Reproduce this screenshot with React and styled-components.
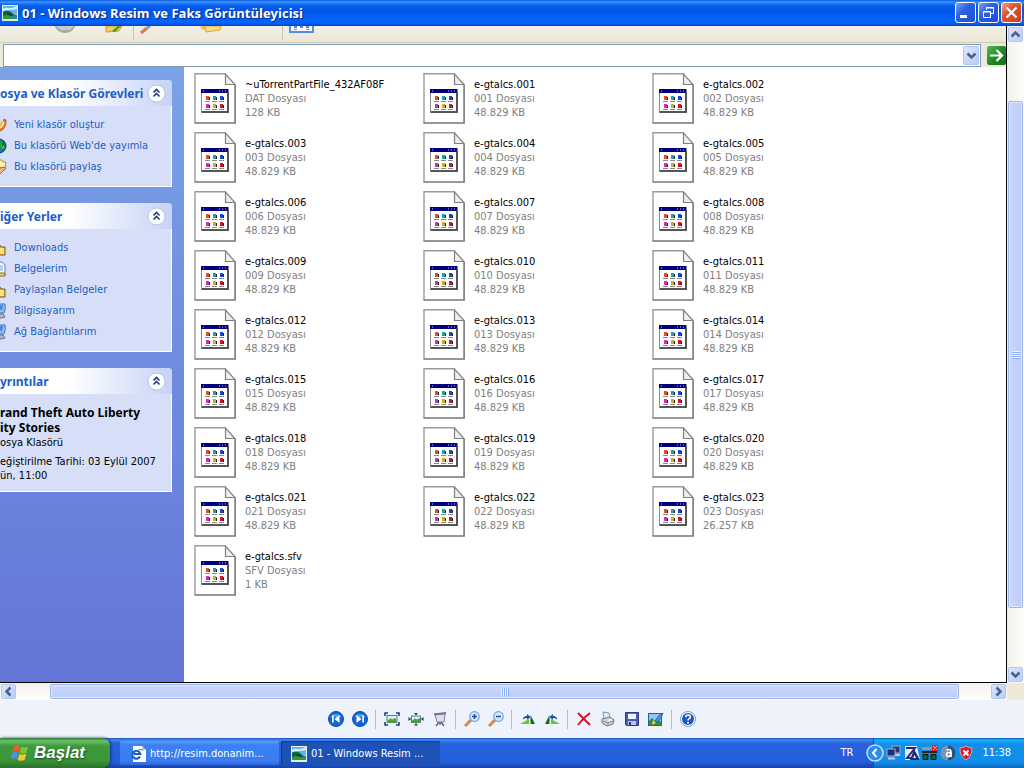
import React from 'react';
import styled, { createGlobalStyle, css } from 'styled-components';

const ui = "'DejaVu Sans Condensed', 'DejaVu Sans', Tahoma, sans-serif";

const tasks = [
  { icon: 'new', label: 'Yeni klasör oluştur' },
  { icon: 'web', label: "Bu klasörü Web'de yayımla" },
  { icon: 'share', label: 'Bu klasörü paylaş' },
];

const places = [
  { icon: 'folder', label: 'Downloads' },
  { icon: 'docs', label: 'Belgelerim' },
  { icon: 'folder', label: 'Paylaşılan Belgeler' },
  { icon: 'pc', label: 'Bilgisayarım' },
  { icon: 'pc', label: 'Ağ Bağlantılarım' },
];

const parts = Array.from({ length: 23 }, (_, i) => {
  const ext = String(i + 1).padStart(3, '0');
  return { name: `e-gtalcs.${ext}`, type: `${ext} Dosyası`, size: ext === '023' ? '26.257 KB' : '48.829 KB' };
});

const files = [
  { name: '~uTorrentPartFile_432AF08F', type: 'DAT Dosyası', size: '128 KB' },
  ...parts,
  { name: 'e-gtalcs.sfv', type: 'SFV Dosyası', size: '1 KB' },
];

const PictureIcon = () => (
  <svg width="16" height="16" viewBox="0 0 16 16" aria-hidden="true">
    <rect width="16" height="16" fill="#e9f1d8" />
    <rect x="1" y="1" width="14" height="8" fill="#5fb4ee" />
    <path d="M1 4q2-2 5-1t9-2v3q-4 1-7 1t-7 1z" fill="#d9effb" />
    <path d="M1 7q2-2 6-1 3 1 4 3l4 1v1H1z" fill="#12643a" />
    <path d="M6 8q3 0 5 3H4z" fill="#0c3f35" />
    <path d="M1 11q5-2 8 0l6 1v2H1z" fill="#2d9a3c" />
    <path d="M8 12q3-2 7-2v2z" fill="#2a78cf" />
  </svg>
);

const FileIcon = () => (
  <svg width="42" height="51" viewBox="0 0 42 51" aria-hidden="true">
    <path d="M1 .5h30.500L41 12v38.500H1z" fill="#fff" />
    <path d="M1 50V.7h30.500" fill="none" stroke="#9a9a9a" strokeWidth="1.400" />
    <path d="M.5 50h40.600V12" fill="none" stroke="#777" strokeWidth="1.600" />
    <path d="M31.500 1v10.500H41z" fill="#eee" stroke="#808080" strokeWidth="1.200" />
    <rect x="7" y="16" width="28" height="24" fill="#8a8a8a" />
    <rect x="8" y="20" width="25" height="18" fill="#fff" />
    <rect x="7" y="16" width="27" height="4" fill="#00007e" />
    <path d="M9 18h1M25 18h1M28 18h1M31 18h1" stroke="#b8c4ff" />
    <path d="M34 19v20H8" fill="none" stroke="#444" strokeWidth="1.500" />
    <g stroke="#8a8a8a">
      <path d="M11 28.500h5M18 28.500h5M25 28.500h5M11 36.500h5M18 36.500h5M25 36.500h5" />
    </g>
    <rect x="12" y="23" width="3" height="4" fill="#d9532c" />
    <rect x="19" y="23" width="3" height="4" fill="#1da0a8" />
    <rect x="26" y="23" width="3" height="4" fill="#1746d8" />
    <rect x="12" y="31" width="3" height="4" fill="#d32fb4" />
    <rect x="19" y="31" width="3" height="4" fill="#d2a91c" />
    <rect x="26" y="31" width="3" height="4" fill="#c91530" />
    <path d="M15.500 24v3M22.500 24v3M29.500 24v3M15.500 32v3M22.500 32v3M29.500 32v3" stroke="#222" />
  </svg>
);

const Chevron = ({ dir }) => {
  const turn = { up: 0, right: 90, down: 180, left: 270 }[dir];
  return (
    <svg width="11" height="11" viewBox="0 0 11 11" aria-hidden="true">
      <path
        d="M1.500 7.500l4-4 4 4"
        fill="none"
        stroke="#4d6185"
        strokeWidth="2.500"
        transform={`rotate(${turn} 5.500 5.500)`}
      />
    </svg>
  );
};

const linkArt = {
  new: (
    <>
      <path d="M1 4h8l4 2v7l-5 2H1z" fill="#f6c65a" />
      <path d="M6 12q6-2 7-10l2 1q1 9-8 12z" fill="#f07a2a" stroke="#a04a10" strokeWidth=".7" />
      <path d="M9 11q3-2 4-6" fill="none" stroke="#fff3c8" strokeWidth="1.500" />
    </>
  ),
  web: (
    <>
      <circle cx="8" cy="8" r="7" fill="#1c6fc4" stroke="#0b3f6b" />
      <path d="M6 2q5 0 7 4l-2 3-3 1-1 4q-4-2-3-7z" fill="#25a336" />
      <path d="M11 3l4 5-4 6z" fill="#0c6a25" />
      <path d="M10 8l3-1 1 3-3 2z" fill="#2fc04a" />
    </>
  ),
  share: (
    <>
      <path d="M4 1h7l1 2h3l-1 6H4z" fill="#fff3bd" stroke="#b98a2a" />
      <path d="M1 10q5-3 8-1l5-1q2 2-1 3l-4 4H1z" fill="#f3b76e" stroke="#a8662b" />
    </>
  ),
  folder: (
    <>
      <path d="M1 5h8l1 2h4v8H1z" fill="#efb93c" stroke="#7a6120" />
      <path d="M2 8h11v6H2z" fill="#ffe27a" />
    </>
  ),
  docs: (
    <>
      <path d="M3 1h8l3 3v10H3z" fill="#f7fbff" stroke="#5b7fae" />
      <path d="M5 5h7M5 7h7M5 9h7" stroke="#78a7dd" />
      <path d="M2 12h12v3H2z" fill="#f0cf6a" stroke="#8b6d20" />
    </>
  ),
  pc: (
    <>
      <path d="M3 1h11q1 5-1 9H2z" fill="#8ec4f6" stroke="#4a6da8" />
      <path d="M6 3l6-1-1 6z" fill="#3a86e0" />
      <path d="M4 11h8l2 3-4 1H2z" fill="#bcb4c8" stroke="#6f6888" />
    </>
  ),
};

const viewerGroups = [
  [
    {
      label: 'Önceki resim',
      art: (
        <>
          <circle cx="8" cy="8" r="7.500" fill="#1265d4" stroke="#0a4cae" />
          <path d="M2.500 6a6 5 0 0 1 11 0z" fill="#4f9ff2" />
          <path d="M4 4.500h1.700v7H4zM11.500 4v8L6.500 8z" fill="#fff" />
        </>
      ),
    },
    {
      label: 'Sonraki resim',
      art: (
        <>
          <circle cx="8" cy="8" r="7.500" fill="#1265d4" stroke="#0a4cae" />
          <path d="M2.500 6a6 5 0 0 1 11 0z" fill="#4f9ff2" />
          <path d="M10.300 4.500H12v7h-1.700zM4.500 4v8l5-4z" fill="#fff" />
        </>
      ),
    },
  ],
  [
    {
      label: 'En uygun',
      art: (
        <>
          <path d="M1 5V2h3M12 2h3v3M15 11v3h-3M4 14H1v-3" fill="none" stroke="#1b3a86" strokeWidth="1.500" />
          <rect x="3" y="4.500" width="10" height="7" fill="#d9eefb" stroke="#2f6f4a" strokeWidth=".8" />
          <path d="M3.500 9.500l3-2 2 1 2-1.500 2 1.500v3h-9z" fill="#4aa52f" />
        </>
      ),
    },
    {
      label: 'Gerçek boyut',
      art: (
        <>
          <rect x="3.500" y="5" width="9" height="6.500" fill="#d9eefb" stroke="#2f6f4a" strokeWidth=".8" />
          <path d="M4 9.500l3-2 2 1 3-1.500v4H4z" fill="#4aa52f" />
          <path d="M8 4.500L6 2h4zM8 12l-2 2.500h4zM3.200 8L.5 6v4zM12.800 8l2.700-2v4z" fill="#1b3a86" />
        </>
      ),
    },
    {
      label: 'Slayt gösterisi',
      art: (
        <>
          <path d="M7 11l-3 4M9 11l3 4M8 11v3" stroke="#54546c" strokeWidth="1.300" />
          <path d="M3 3h10l-1 8H5z" fill="#dcdcf3" stroke="#8080a4" />
          <path d="M2 3.500L14 2" stroke="#73738f" strokeWidth="1.800" />
        </>
      ),
    },
  ],
  [
    {
      label: 'Yakınlaştır',
      art: (
        <>
          <path d="M1 15l6-6" stroke="#c98a55" strokeWidth="3" />
          <circle cx="10.500" cy="5.500" r="4.800" fill="#d3eafc" stroke="#75a4d8" strokeWidth="1.200" />
          <path d="M8 5.500h5M10.500 3v5" stroke="#1c4f9c" strokeWidth="1.500" />
        </>
      ),
    },
    {
      label: 'Uzaklaştır',
      art: (
        <>
          <path d="M1 15l6-6" stroke="#c98a55" strokeWidth="3" />
          <circle cx="10.500" cy="5.500" r="4.800" fill="#d3eafc" stroke="#75a4d8" strokeWidth="1.200" />
          <path d="M8 5.500h5" stroke="#1c4f9c" strokeWidth="1.500" />
        </>
      ),
    },
  ],
  [
    {
      label: 'Saat yönünde döndür',
      art: (
        <>
          <path d="M0 13l9-5v5z" fill="#5fc739" />
          <path d="M10.500 13V4L15 13z" fill="#176a20" />
          <path d="M3 8.500Q3 5 7 5V3l3.500 3L7 9V7Q5 6.500 3 8.500z" fill="#1a4f9e" />
        </>
      ),
    },
    {
      label: 'Saat yönünün tersine döndür',
      art: (
        <>
          <path d="M16 13L7 8v5z" fill="#5fc739" />
          <path d="M5.500 13V4L1 13z" fill="#176a20" />
          <path d="M13 8.500Q13 5 9 5V3L5.500 6 9 9V7q2-.5 4 1.500z" fill="#1a4f9e" />
        </>
      ),
    },
  ],
  [
    {
      label: 'Sil',
      art: <path d="M2 2q5 5 12 12M14 2Q7 7 2 14" fill="none" stroke="#d8112f" strokeWidth="2" />,
    },
    {
      label: 'Yazdır',
      art: (
        <>
          <path d="M3 1l6 1 1 5-6 1z" fill="#dcecff" stroke="#7797c4" />
          <path d="M2 8l8-2 4 3-1 4-6 2-5-3z" fill="#d4d4d0" stroke="#777" />
          <path d="M3 10l5 2 5-2M8 12v3" fill="none" stroke="#8a8a86" />
          <path d="M8 9l3-1 1 1-3 1z" fill="#fff" />
        </>
      ),
    },
    {
      label: 'Farklı kaydet',
      art: (
        <>
          <path d="M1.500 1.500h13v13h-12l-1-1z" fill="#4a58b8" stroke="#2b3888" />
          <path d="M4 2h8v6H4z" fill="#f1f3fb" />
          <path d="M4 2.500h8" stroke="#d44b62" />
          <path d="M4 10h8v4H4z" fill="#bfc5de" />
          <path d="M5 11h2v3H5z" fill="#28357e" />
        </>
      ),
    },
    {
      label: 'Düzenle',
      art: (
        <>
          <rect x=".5" y="2.500" width="13" height="12" fill="#8ccbf5" stroke="#2a5b9e" />
          <path d="M1 10l3-3 3 3 3-2 3 3v3H1z" fill="#2f8f3a" />
          <path d="M4 14l1-5 3 3z" fill="#f3d24c" />
          <path d="M7 10q3-6 8-8-1 6-6 9z" fill="#4d8fe0" stroke="#1f4f9c" strokeWidth=".7" />
        </>
      ),
    },
  ],
  [
    {
      label: 'Yardım',
      art: (
        <>
          <circle cx="8" cy="8" r="7.500" fill="#fff" stroke="#7f9ad0" />
          <circle cx="8" cy="8" r="6" fill="#1d53c2" />
          <path d="M5.800 6.300q0-2.300 2.300-2.300t2.200 2q0 1.200-1.200 1.800-1 .5-1 1.700" fill="none" stroke="#fff" strokeWidth="1.700" />
          <circle cx="8" cy="11.700" r="1" fill="#fff" />
        </>
      ),
    },
  ],
];

const trayArt = [
  <g key="net">
    <rect x="6" y="1" width="8" height="7" fill="#2a3a80" stroke="#9facd4" />
    <path d="M8 10h6" stroke="#c8cfe4" strokeWidth="2" />
    <rect x="1" y="4" width="8" height="7" fill="#23306c" stroke="#9facd4" />
    <path d="M2 13.500h7" stroke="#c8cfe4" strokeWidth="2" />
  </g>,
  <g key="za">
    <path d="M1 1h12l3 14H1z" fill="#e9edf9" />
    <path d="M2 3h9L3 13h5" fill="none" stroke="#1c2d7c" strokeWidth="2" />
    <path d="M10 4l6 11H6z" fill="#1c2d7c" />
    <path d="M10.500 10l1.500 3H9z" fill="#e8ecfa" />
  </g>,
  <g key="gauge">
    <path d="M0 2h15v3H0z" fill="#8d9a9a" />
    <path d="M0 6h15v2H0z" fill="#222" />
    <path d="M1 9.500h5v5H1zM9 9.500h5v5H9z" fill="#0b6b20" stroke="#111" />
    <path d="M10 0h6v6h-6z" fill="#e12020" />
    <path d="M11 1l4 4M15 1l-4 4" stroke="#fff" strokeDasharray="1 1" />
  </g>,
  <g key="av">
    <circle cx="8" cy="8" r="7.500" fill="#7896ac" />
    <path d="M8 .5a7.500 7.500 0 0 1 0 15z" fill="#2f4f78" />
    <circle cx="8.500" cy="9.500" r="2" fill="none" stroke="#fff" strokeWidth="1.800" />
    <path d="M6.500 5q4.500-1.500 4.500 2v5" fill="none" stroke="#fff" strokeWidth="1.800" />
  </g>,
  <g key="shield">
    <path d="M8 1q3 2 6 2 .5 8-6 12-6.500-4-6-12 3 0 6-2z" fill="#d91c25" stroke="#d9a3b0" />
    <path d="M5.500 5.500l5 5M10.500 5.500l-5 5" stroke="#fff" strokeWidth="1.800" />
  </g>,
];

const Panel = ({ title, children }) => (
  <PanelFrame>
    <PanelHead>
      <PanelTitle>{title}</PanelTitle>
      <Collapse type="button" aria-label="Daralt">
        <svg width="19" height="19" viewBox="0 0 19 19" aria-hidden="true">
          <circle cx="9.500" cy="9.500" r="8.500" fill="#fff" stroke="#b6c3e2" />
          <path d="M6.500 8.500l3-3 3 3M6.500 12.500l3-3 3 3" fill="none" stroke="#1f3d80" strokeWidth="1.600" />
        </svg>
      </Collapse>
    </PanelHead>
    <PanelBody>{children}</PanelBody>
  </PanelFrame>
);

const Links = ({ items }) => (
  <LinkList>
    {items.map(({ icon, label }) => (
      <li key={label}>
        <TaskLink href="#">
          <svg width="16" height="16" viewBox="0 0 16 16" aria-hidden="true">
            {linkArt[icon]}
          </svg>
          {label}
        </TaskLink>
      </li>
    ))}
  </LinkList>
);

const ScrollBar = ({ vertical, before, thumb, after }) => (
  <Track $vertical={vertical}>
    <ScrollButton type="button" aria-label={vertical ? 'Yukarı' : 'Sola'}>
      <Chevron dir={vertical ? 'up' : 'left'} />
    </ScrollButton>
    <Space $grow={before} />
    <Thumb $grow={thumb} $vertical={vertical}>
      <Grip $vertical={vertical} />
    </Thumb>
    <Space $grow={after} />
    <ScrollButton type="button" aria-label={vertical ? 'Aşağı' : 'Sağa'}>
      <Chevron dir={vertical ? 'down' : 'right'} />
    </ScrollButton>
  </Track>
);

const App = () => (
  <Viewer>
    <GlobalStyle />
    <TitleBar>
      <PictureIcon />
      <Title>01 - Windows Resim ve Faks Görüntüleyicisi</Title>
      <CaptionButton type="button" aria-label="Simge durumuna küçült">
        <svg width="19" height="19" viewBox="0 0 19 19" aria-hidden="true">
          <path d="M4 13.500h7" stroke="#fff" strokeWidth="3" />
        </svg>
      </CaptionButton>
      <CaptionButton type="button" aria-label="Önceki boyut">
        <svg width="19" height="19" viewBox="0 0 19 19" aria-hidden="true">
          <path d="M7.500 7V4.500h7v6H12M7 5h8" fill="none" stroke="#fff" />
          <path d="M4.500 8.500h7v6h-7zM4 9h8" fill="none" stroke="#fff" />
        </svg>
      </CaptionButton>
      <CaptionButton type="button" aria-label="Kapat" $close>
        <svg width="19" height="19" viewBox="0 0 19 19" aria-hidden="true">
          <path d="M4.500 4.500l10 10M14.500 4.500l-10 10" stroke="#fff" strokeWidth="2.200" />
        </svg>
      </CaptionButton>
    </TitleBar>

    <Stage>
      <Picture>
        <IconStrip>
          <svg width="26" height="10" viewBox="0 0 26 10" aria-hidden="true">
            <circle cx="13" cy="-4" r="11" fill="#a9a9a5" />
            <path d="M4 0h18l-4 4H9z" fill="#c9c9c5" />
          </svg>
          <OpenFolder width="18" height="10" viewBox="0 0 18 10" aria-hidden="true">
            <path d="M1 0h16l-3 5-13 1z" fill="#f4ce5e" stroke="#c79f32" />
            <path d="M7 5l6-5h3l-6 6z" fill="#3c9b34" />
          </OpenFolder>
          <Rule />
          <svg width="14" height="10" viewBox="0 0 14 10" aria-hidden="true">
            <path d="M1 7l6-5" stroke="#d37a55" strokeWidth="3" />
            <path d="M7 2l3-2" stroke="#8c9fc8" strokeWidth="3" />
          </svg>
          <FolderPair width="22" height="10" viewBox="0 0 22 10" aria-hidden="true">
            <path d="M0 0h16v2L2 4z" fill="#efc14c" />
            <path d="M5 0h16l-1 4-14 2z" fill="#fbe08a" stroke="#d7a637" />
          </FolderPair>
          <Rule />
          <svg width="26" height="10" viewBox="0 0 26 10" aria-hidden="true">
            <path d="M1 -2v8h23v-8z" fill="#f6f9ff" stroke="#4f8ee0" strokeWidth="2" />
            <path d="M5 1h3M11 1h3M17 1h3" stroke="#5d86c8" strokeWidth="2" />
            <path d="M5 3.500h3M17 3.500h3" stroke="#d57461" />
          </svg>
        </IconStrip>

        <AddressBar>
          <AddressField>
            <AddressInput type="text" aria-label="Adres" />
            <DropButton type="button" aria-label="Adres listesi">
              <Chevron dir="down" />
            </DropButton>
          </AddressField>
          <GoButton type="button" aria-label="Git">
            <svg width="19" height="19" viewBox="0 0 19 19" aria-hidden="true">
              <path d="M3 9.500h11M9.500 4l5.500 5.500L9.500 15" fill="none" stroke="#fff" strokeWidth="2.200" />
            </svg>
          </GoButton>
        </AddressBar>

        <Explorer>
          <Sidebar>
            <Panel title="osya ve Klasör Görevleri">
              <Links items={tasks} />
            </Panel>
            <Panel title="iğer Yerler">
              <Links items={places} />
            </Panel>
            <Panel title="yrıntılar">
              <Details>
                <p>
                  <FolderName>
                    rand Theft Auto Liberty
                    <br />
                    ity Stories
                  </FolderName>
                  <br />
                  osya Klasörü
                </p>
                <p>
                  eğiştirilme Tarihi: 03 Eylül 2007
                  <br />
                  ün, 11:00
                </p>
              </Details>
            </Panel>
          </Sidebar>
          <FileGrid>
            {files.map(({ name, type, size }) => (
              <File key={name}>
                <FileIcon />
                <FileText>
                  <FileName>{name}</FileName>
                  <span>{type}</span>
                  <span>{size}</span>
                </FileText>
              </File>
            ))}
          </FileGrid>
        </Explorer>
      </Picture>
      <ScrollBar vertical before={59} thumb={505} after={59} />
      <ScrollBar before={34} thumb={908} after={32} />
      <Corner />
    </Stage>

    <ViewerBar>
      {viewerGroups.map((group, i) => (
        <ToolGroup key={group[0].label} $first={i === 0}>
          {group.map(({ label, art }) => (
            <ToolButton type="button" key={label} aria-label={label}>
              <svg width="16" height="16" viewBox="0 0 16 16" aria-hidden="true">
                {art}
              </svg>
            </ToolButton>
          ))}
        </ToolGroup>
      ))}
    </ViewerBar>

    <TaskBar>
      <Start type="button">
        <svg width="20" height="20" viewBox="0 0 20 20" aria-hidden="true">
          <path d="M4 3q3-2 6 0L8.500 9q-3-2-6 0z" fill="#ee5a28" />
          <path d="M11 3.500q3 2 7 0L16.500 10q-4 1.500-7 0z" fill="#7fc33a" />
          <path d="M2.200 10q3-2 6 0L6.700 16q-3-2-6 0z" fill="#4b8df0" />
          <path d="M9.300 11q3 1.500 7 0L14.600 17q-4 1.500-7 0z" fill="#fbc52d" />
        </svg>
        Başlat
      </Start>
      <Task type="button">
        <svg width="16" height="16" viewBox="0 0 16 16" aria-hidden="true">
          <path d="M3 0h9l4 4v12H3z" fill="#fbfbf4" />
          <path d="M12 0v4h4z" fill="#c3c3b8" />
          <path d="M10 10.500a4 4 0 1 1 .3-2.500H4" fill="none" stroke="#1b55b8" strokeWidth="2" />
          <path d="M1 13q-1-3 4-7t8-2" fill="none" stroke="#3577d6" />
        </svg>
        <span>http://resim.donanim...</span>
      </Task>
      <Task type="button" $active>
        <PictureIcon />
        <span>01 - Windows Resim ...</span>
      </Task>
      <Lang>TR</Lang>
      <Tray>
        <TrayToggle type="button" aria-label="Gizli simgeleri göster">
          <svg width="18" height="18" viewBox="0 0 18 18" aria-hidden="true">
            <circle cx="9" cy="9" r="8" fill="#2c8df0" stroke="#bfe0fb" strokeWidth="1.500" />
            <path d="M10.500 5L7 9l3.500 4" fill="none" stroke="#fff" strokeWidth="2" />
          </svg>
        </TrayToggle>
        {trayArt.map((art) => (
          <svg key={art.key} width="16" height="16" viewBox="0 0 16 16" aria-hidden="true">
            {art}
          </svg>
        ))}
        <Clock>11:38</Clock>
      </Tray>
    </TaskBar>
  </Viewer>
);

const GlobalStyle = createGlobalStyle`
  * {
    box-sizing: border-box;
  }
  body {
    margin: 0;
    font: 11px/14px ${ui};
    color: #000;
  }
  button, input {
    margin: 0;
    padding: 0;
    border: 0;
    font: inherit;
  }
  svg {
    display: block;
    flex: none;
  }
  p, ul {
    margin: 0;
    padding: 0;
    list-style: none;
  }
`;

const Viewer = styled.div`
  display: flex;
  flex-direction: column;
  min-height: 100vh;
  background: #eef2fb;
`;
const TitleBar = styled.header`
  display: flex;
  align-items: center;
  gap: 2px;
  height: 26px;
  padding: 0 2px 1px;
  background: linear-gradient(
    #0a5be0 0,
    #3c94ff 2px,
    #0a62ee 5px,
    #0254e4 10px,
    #0261fa 18px,
    #0163fc 23px,
    #0142c5 26px
  );
`;
const Title = styled.h1`
  flex: 1;
  margin: 0;
  padding-left: 2px;

  font: bold 13px/20px 'Open Sans', 'Noto Sans', sans-serif;
  color: #fff;
  text-shadow: 1px 1px 1px #0a2a80;
  white-space: nowrap;
`;
const CaptionButton = styled.button`
  width: 21px;
  height: 21px;
  border: 1px solid #fff;
  border-radius: 3px;

  background: linear-gradient(135deg, #7ea4f2, #2d5fe0 40%, #1c4fd4);
  ${({ $close }) =>
    $close &&
    css`
      background: linear-gradient(135deg, #f0a18a, #e0532c 40%, #c9401c);
    `}
`;

const Stage = styled.main`
  flex: 1;
  display: grid;
  grid-template-columns: minmax(0, 1fr) 17px;
  grid-template-rows: 1fr 17px;
`;
const Picture = styled.div`
  display: flex;
  flex-direction: column;
  border-right: 1px solid #000;
  border-bottom: 1px solid #000;
  background: #fff;
`;
const IconStrip = styled.div`
  display: flex;
  height: 17px;
  padding-left: 52px;
  border-bottom: 1px solid #d2cdb9;
  background: linear-gradient(#f1eee5, #ece8d8);
`;
const OpenFolder = styled.svg`
  margin: 0 10px 0 27px;
`;
const Rule = styled.i`
  width: 1px;
  height: 14px;
  margin-right: 6px;
  background: #c9c5b4;
`;
const FolderPair = styled.svg`
  margin: 0 60px 0 46px;
`;
const AddressBar = styled.div`
  display: flex;
  gap: 6px;
  height: 24px;
  padding: 1px 0 0 3px;
  background: #ece9d8;
`;
const AddressField = styled.div`
  flex: 1;
  display: flex;
  padding: 1px;
  border: 1px solid #7f9db9;
  background: #fff;
`;
const AddressInput = styled.input`
  flex: 1;
  min-width: 0;
  background: transparent;
  outline: 0;
`;
const buttonFace = css`
  display: flex;
  align-items: center;
  justify-content: center;
  border: 1px solid #b3c6ee;
  border-radius: 2px;
  background: linear-gradient(135deg, #dce6fe, #bccbf6);
`;
const DropButton = styled.button`
  ${buttonFace}
  width: 16px;
`;
const GoButton = styled.button`
  align-self: center;
  width: 19px;
  height: 19px;
  border-radius: 2px;
  background: linear-gradient(135deg, #5cb85a, #1c8c24 50%, #127018);
`;

const Explorer = styled.div`
  flex: 1;
  display: flex;
`;
const Sidebar = styled.aside`
  flex: none;
  display: flex;
  flex-direction: column;
  gap: 16px;
  width: 184px;
  padding: 13px 12px 13px 0;
  background: linear-gradient(#7ba2e7, #6375d6);
`;
const PanelFrame = styled.section`
  border-radius: 0 4px 0 0;
  background: #d6dff7;
`;
const PanelHead = styled.div`
  display: flex;
  align-items: center;
  justify-content: space-between;
  height: 26px;
  padding-right: 6px;
  border-radius: 0 4px 0 0;
  background: linear-gradient(90deg, #fff 40%, #c6d3f7);
`;
const PanelTitle = styled.h2`
  margin: 0;
  padding-top: 2px;

  font: bold 12px/16px 'Noto Sans', sans-serif;
  color: #215dc6;
  white-space: nowrap;
`;
const Collapse = styled.button`
  background: transparent;
`;
const PanelBody = styled.div`
  border-right: 1px solid #fff;
  border-bottom: 1px solid #fff;
`;
const LinkList = styled.ul`
  padding: 8px 0 9px;
`;
const TaskLink = styled.a`
  display: flex;
  align-items: center;
  gap: 7px;
  height: 21px;
  margin-left: -9px;

  color: #215dc6;
  text-decoration: none;
  white-space: nowrap;
`;
const Details = styled.div`
  display: grid;
  gap: 5px;
  padding: 12px 0 8px;
  white-space: nowrap;
`;
const FolderName = styled.b`
  font-family: 'Noto Sans', sans-serif;
  font-size: 12px;
`;

const FileGrid = styled.ul`
  flex: 1;
  display: grid;
  grid-template-columns: repeat(auto-fill, 229px);
  align-content: start;
  row-gap: 8px;
  padding: 6px 10px;
`;
const File = styled.li`
  display: flex;
  gap: 9px;
`;
const FileText = styled.div`
  display: flex;
  flex-direction: column;
  padding-top: 5px;

  color: #808080;
  white-space: nowrap;
`;
const FileName = styled.span`
  color: #000;
`;

const Track = styled.div`
  display: flex;
  flex-direction: ${({ $vertical }) => ($vertical ? 'column' : 'row')};
  padding: 1px;
  background: linear-gradient(${({ $vertical }) => ($vertical ? '90deg' : '180deg')}, #f3f1ec, #fefefb);
`;
const ScrollButton = styled.button`
  ${buttonFace}
  flex: none;
  width: 15px;
  height: 15px;
`;
const Space = styled.div`
  flex: ${({ $grow }) => $grow} 0 0;
`;
const Thumb = styled.div`
  flex: ${({ $grow }) => $grow} 0 0;
  display: flex;
  align-items: center;
  justify-content: center;
  border: 1px solid #9db5e8;
  border-radius: 2px;
  box-shadow: inset 0 0 0 1px #dfe8ff;
  background: linear-gradient(${({ $vertical }) => ($vertical ? '90deg' : '180deg')}, #cad8fd, #bccbf8);
`;
const Grip = styled.i`
  width: 8px;
  height: 8px;
  background: repeating-linear-gradient(
    ${({ $vertical }) => ($vertical ? '180deg' : '90deg')},
    #eef4fe 0 1px,
    #8cb0f8 1px 2px
  );
`;
const Corner = styled.div`
  background: #ece9d8;
`;

const ViewerBar = styled.div`
  display: flex;
  align-items: center;
  justify-content: center;
  height: 38px;
`;
const ToolGroup = styled.div`
  display: flex;
  align-items: center;

  ${({ $first }) =>
    !$first &&
    css`
      &::before {
        content: '';
        width: 1px;
        height: 19px;
        margin: 0 4px 0 3px;
        background: #b9bac0;
      }
    `}
`;
const ToolButton = styled.button`
  display: flex;
  align-items: center;
  justify-content: center;
  width: 24px;
  height: 24px;
  background: transparent;
`;

const TaskBar = styled.footer`
  display: flex;
  align-items: center;
  height: 30px;
  color: #fff;
  background: linear-gradient(#1f4fc0 0, #3f8cf3 2px, #2862dc 5px, #245edb 24px, #1941a5 30px);
`;
const Start = styled.button`
  display: flex;
  align-items: center;
  gap: 4px;
  align-self: stretch;
  width: 110px;
  margin-right: 10px;
  padding-left: 10px;
  border-radius: 0 8px 8px 0;
  box-shadow: 1px 0 3px #12307c;

  font: italic bold 17px/22px 'Liberation Sans', sans-serif;
  color: #fff;
  text-shadow: 1px 1px 2px #1c4a1c;
  background: linear-gradient(#2f7d2f 0, #6cc06a 3px, #3c9a3c 8px, #3a963a 22px, #2a702a 30px);
`;
const Task = styled.button`
  display: flex;
  align-items: center;
  gap: 4px;
  width: 159px;
  height: 24px;
  margin-right: 2px;
  padding: 1px 0 0 10px;
  border-radius: 2px;

  color: #fff;
  white-space: nowrap;
  background: linear-gradient(#5c9bfa, #3c81f3 4px, #3a7cf0 20px, #3069d8);
  ${({ $active }) =>
    $active &&
    css`
      background: #1e52b7;
      box-shadow: inset 1px 1px 1px #123a8c;
    `}
`;
const Lang = styled.span`
  margin-left: auto;
  padding-right: 20px;
`;
const Tray = styled.div`
  display: flex;
  align-items: center;
  gap: 2px;
  align-self: stretch;
  padding-right: 13px;
  border-left: 1px solid #0f4fb0;
  background: linear-gradient(#0c59b9 0, #1bb0f8 2px, #1290e9 6px, #0f8deb 24px, #0b67b8 30px);
`;
const TrayToggle = styled.button`
  margin-left: -8px;
  background: transparent;
`;
const Clock = styled.time`
  padding-left: 6px;
`;

export default App;
